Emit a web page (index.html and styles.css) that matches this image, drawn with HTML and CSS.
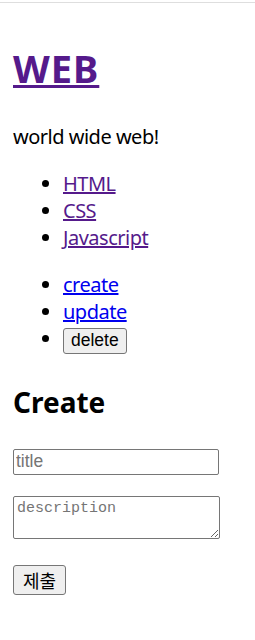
FILE: index.html
```html
<!DOCTYPE html>
<html lang="ko">
<head>
    <meta charset="UTF-8">
    <meta name="viewport" content="width=device-width, initial-scale=1.0">
    <title>WEB</title>
    <link rel="stylesheet" href="styles.css">
</head>
<body>
    <div class="chrome"></div>
    <div class="page">
        <h1><a href="#" class="visited">WEB</a></h1>
        <p class="intro">world wide web!</p>

        <!-- 글 목록 -->
        <ul class="list">
            <li><a href="#" class="visited">HTML</a></li>
            <li><a href="#" class="visited">CSS</a></li>
            <li><a href="#" class="visited">Javascript</a></li>
        </ul>

        <!-- 컨트롤 -->
        <ul class="list">
            <li><a href="#">create</a></li>
            <li><a href="#">update</a></li>
            <li><input type="button" class="btn" value="delete"></li>
        </ul>

        <h2>Create</h2>
        <form class="create-form">
            <input type="text" name="title" class="title-input" placeholder="title">
            <textarea name="desc" class="desc-input" placeholder="description"></textarea>
            <input type="submit" class="btn submit" value="제출">
        </form>
    </div>
</body>
</html>
```

FILE: styles.css
```css
body {
    margin: 0;
    font-family: "Noto Sans", "Noto Sans CJK KR", sans-serif;
    color: #000;
    background: #fff;
}
.chrome {
    height: 2px;
    border-bottom: 1px solid #dedede;
}
.page {
    padding: 0 13px;
}
a {
    color: #0000ee;
}
a.visited {
    color: #551a8b;
}
h1 {
    margin: 41px 0 0;
    font-size: 38px;
    line-height: 48px;
    font-weight: bold;
    letter-spacing: 1px;
}
.intro {
    margin: 31px 0 20px;
    font-size: 20px;
    line-height: 27px;
    letter-spacing: -0.5px;
}
.list {
    margin: 20px 0;
    padding-left: 50px;
    font-size: 20px;
    line-height: 27px;
    letter-spacing: -0.5px;
}
.btn {
    font-family: "Liberation Sans", Arial, sans-serif;
    font-size: 17.5px;
    letter-spacing: 0;
    background: #efefef;
    border: 1px solid #767676;
    border-radius: 3px;
    padding: 1px 7px;
    height: 26px;
    color: #000;
}
h2 {
    margin: 30px 0 0;
    font-size: 28px;
    line-height: 36px;
    font-weight: bold;
}
.create-form {
    padding-top: 29px;
}
.title-input {
    display: block;
    box-sizing: border-box;
    width: 206px;
    height: 26px;
    margin: 0;
    padding: 1px 2px;
    border: 1px solid #767676;
    border-radius: 2px;
    font-family: "Liberation Sans", Arial, sans-serif;
    font-size: 17.5px;
}
.desc-input {
    display: block;
    box-sizing: border-box;
    width: 207px;
    height: 43px;
    margin: 21px 0 0;
    padding: 3px 3px;
    border: 1px solid #767676;
    border-radius: 2px;
    font-family: "Liberation Mono", monospace;
    font-size: 15px;
}
::placeholder {
    color: #757575;
}
.submit {
    display: block;
    margin-top: 26px;
    height: 30px;
    width: 53px;
    padding: 0;
    font-family: "Noto Sans CJK KR", sans-serif;
    font-size: 18px;
}
```
